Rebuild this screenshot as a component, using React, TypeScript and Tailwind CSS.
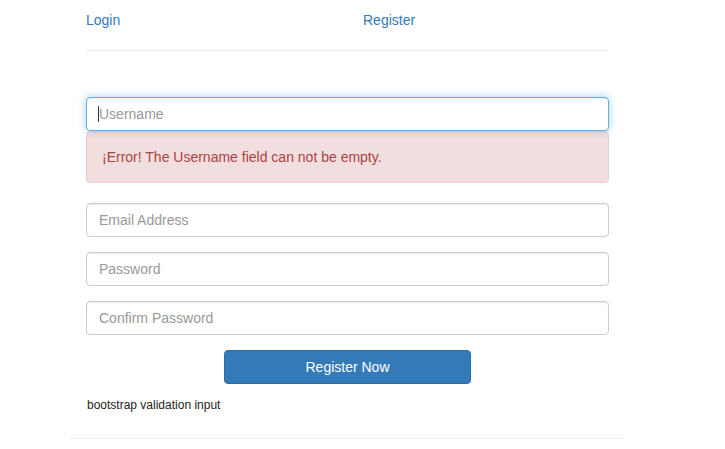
import React from "react";

export default function App() {
  const inputCls =
    "block h-[34px] w-full rounded-[4px] border border-[#ccc] bg-white px-[12px] text-[14px] text-[#555] shadow-[inset_0_1px_1px_rgba(0,0,0,0.075)] outline-none placeholder:text-[#999]";

  return (
    <div className="min-h-screen bg-white font-['Liberation_Sans',Arial,sans-serif] text-[14px] text-[#333]">
      <div className="ml-[70px] w-[555px]">
        <div className="px-4">
          {/* nav */}
          <div className="flex h-[40px] items-center">
            <a className="w-[277px] text-[#337ab7]">Login</a>
            <a className="text-[#337ab7]">Register</a>
          </div>
          <div className="mt-[10px] border-t border-[#eee]" />

          {/* form */}
          <form className="mt-[46px]">
            <div className="relative">
              <input
                className="block h-[34px] w-full rounded-[4px] border border-[#66afe9] bg-white px-[12px] text-[14px] text-[#555] shadow-[inset_0_1px_1px_rgba(0,0,0,0.075),0_0_8px_rgba(102,175,233,0.6)] outline-none placeholder:text-[#999]"
                placeholder="Username"
              />
              <span className="absolute left-[12px] top-[9px] h-[16px] w-px bg-[#333]" />
            </div>
            <div className="flex h-[52px] items-center rounded-[4px] border border-[#ebccd1] bg-[#f2dede] px-[15px] text-[#a94442]">
              ¡Error! The Username field can not be empty.
            </div>

            <input className={`mt-[20px] ${inputCls}`} placeholder="Email Address" />
            <input className={`mt-[15px] ${inputCls}`} type="password" placeholder="Password" />
            <input className={`mt-[15px] ${inputCls}`} type="password" placeholder="Confirm Password" />

            <div className="mt-[15px] flex justify-center">
              <button
                type="button"
                className="h-[34px] w-[247px] rounded-[4px] border border-[#2e6da4] bg-[#337ab7] text-[14px] text-white"
              >
                Register Now
              </button>
            </div>
          </form>

          <p className="mt-[13px] pl-px text-[12px] leading-[17px] text-[#222]">bootstrap validation input</p>
        </div>
        <div className="mt-[24px] border-t border-[#eee]" />
      </div>
    </div>
  );
}
